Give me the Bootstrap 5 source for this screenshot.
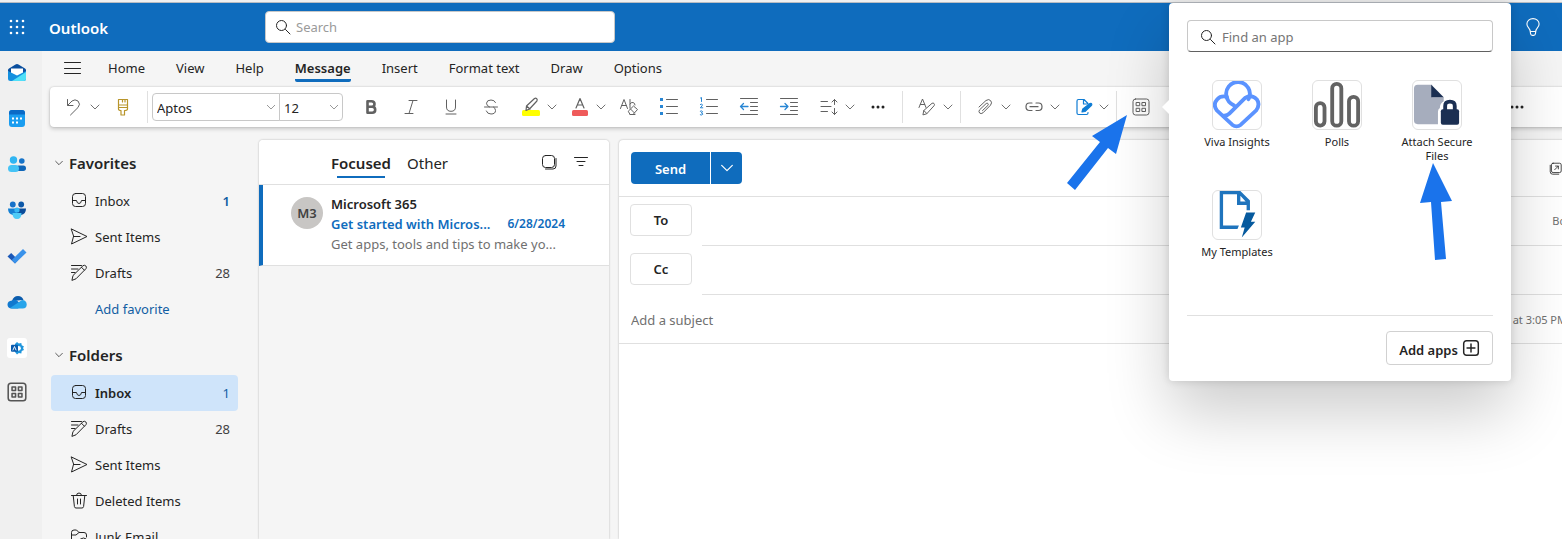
<!DOCTYPE html>
<html lang="en">
<head>
<meta charset="utf-8">
<meta name="viewport" content="width=device-width, initial-scale=1">
<title>Outlook</title>
<link href="https://cdn.jsdelivr.net/npm/bootstrap@5.3.0/dist/css/bootstrap.min.css" rel="stylesheet">
<style>
:root{--brand:#0f6cbd;--ink:#242424;--muted:#616161;--line:#e0e0e0}
body{font-family:"Noto Sans","Open Sans",sans-serif;font-size:13px;line-height:20px;color:var(--ink);background:#f5f5f5;height:100vh;overflow:hidden}
svg{display:block;fill:none;stroke:currentColor;stroke-linecap:round;stroke-linejoin:round;flex:none}
button{font:inherit;color:inherit}
.semi{font-weight:600}
.plain-btn{border:0;background:none;padding:0;display:flex;align-items:center;justify-content:center}
.topbar{background:var(--brand);height:51px;border-top:2px solid #f0f0f0;box-shadow:inset 0 1px #b8bcc2;color:#fff}
.topbar .launcher{width:33px}
.brand-name{font-size:15px;margin-left:16px;width:216px;padding-top:2px}
.box-input{background:#fff;border:1px solid #c8c8c8;border-radius:4px;height:32px;color:var(--ink)}
.box-input input{border:0;outline:0;background:none;min-width:0;flex:1;font-size:13px;padding:0}
.box-input input::placeholder{color:#757575;opacity:1}
.top-search{width:350px}
.top-search input::placeholder{color:#9a9a9a}
.find-app{padding:2px 12px 0;gap:6px}
.rail{width:42px;background:#f0f0f0;flex:none}
.rail a{height:46px;width:34px;display:flex;align-items:center;justify-content:center}
.rail a:first-child{height:44px}.rail a:last-child{height:42px;color:#555}
.rail svg{stroke:none}
.stage{margin-right:-12px}
.tabs{height:36px;padding-left:14px}
.tabs a{color:var(--ink);text-decoration:none;margin-left:31px;height:31px;padding-top:7px;border-bottom:3px solid transparent}
.tabs a:first-of-type{margin-left:27px}
.tabs a.active{border-color:var(--brand);font-weight:600;border-radius:2px}
.ribbon{height:40px;margin-left:8px;padding-left:4px;background:#fff;border-radius:4px;box-shadow:0 0 2px rgba(0,0,0,.2),0 2px 4px rgba(0,0,0,.18);color:var(--muted);z-index:5}
.tool{width:40px;height:40px;flex:none}
.tool-split{width:49px;padding:0 2px 0 10px;gap:5px}
.rule{width:1px;height:32px;background:var(--line);margin:0 4px;flex:none}
.pick{border:1px solid #c8c8c8;height:28px;border-radius:4px;background-color:#fff;font-size:13px;padding:1px 4px 0;line-height:26px;color:var(--ink);background-position:right 3px center;background-size:10px 10px;background-image:url("data:image/svg+xml,%3csvg xmlns='http://www.w3.org/2000/svg' viewBox='0 0 10 10'%3e%3cpath fill='none' stroke='%23999' d='m1 3 4 4 4-4'/%3e%3c/svg%3e")}
.pick-font{width:128px;border-radius:4px 0 0 4px}
.pick-size{width:64px;border-radius:0 4px 4px 0;margin-left:-1px;margin-right:8px}
.flyout{position:absolute;left:48px;top:-84px;width:342px;padding:17px 18px 16px;background:#fff;border-radius:4px;box-shadow:0 0 8px rgba(0,0,0,.14),0 32px 64px rgba(0,0,0,.2);color:var(--ink)}
.flyout::before{content:"";position:absolute;left:-7px;top:96px;border:solid transparent;border-width:8px 8px 8px 0;border-right-color:#fff}
.flyout .box-input{border-bottom-color:#616161}
.apps{display:grid;grid-template-columns:repeat(3,100px);grid-auto-rows:110px;margin-top:28px;height:235px}
.app-tile{display:flex;flex-direction:column;align-items:center;font-size:11px;line-height:14px;border:0;background:none;padding:0 8px;color:var(--ink)}
.app-icon{border:1px solid var(--line);border-radius:6px;margin-bottom:5px}
.flyout-foot{border-top:1px solid var(--line);padding-top:15px}
.add-apps{border:1px solid #d1d1d1;border-radius:4px;height:34px;width:107px;background:#fff;padding:4px 0 0}
.add-apps svg{margin-bottom:4px}
.pointer{position:absolute;left:-60px;top:0;pointer-events:none;stroke:none;fill:#1a73eb}
.folders{width:217px;flex:none;padding:5px 21px 0 9px}
.folder-head{height:38px;font-size:15px;font-weight:600;gap:5px;padding:0 0 2px 3px}
.folder-list{list-style:none;padding:0;margin:0 0 10px}
.folder{height:36px;padding:0 8px 0 19px;gap:7px;color:var(--ink);text-decoration:none;border-radius:4px;white-space:nowrap}
.folder .num{color:#424242}
.folder .num.new{color:#115ea3}
.folder.current{background:#cfe4fa}
.folder.add{color:#115ea3;padding-left:44px}
.inbox{width:350px;flex:none;background:#f5f5f5;border-radius:4px 4px 0 0;box-shadow:0 0 2px rgba(0,0,0,.3)}
.inbox-top{height:45px;background:#fff;border-bottom:1px solid var(--line);border-radius:4px 4px 0 0;padding:2px 20px 0 72px}
.inbox-top a{font-size:15px;color:var(--ink);text-decoration:none}
.inbox-top a.on{font-weight:600;position:relative;margin-right:16px}
.inbox-top a.on::after{content:"";position:absolute;left:6px;right:6px;bottom:-5px;height:2px;background:var(--brand)}
.mail{height:81px;background:#fff;border-left:4px solid var(--brand);border-bottom:1px solid var(--line);padding:9px 44px 0 28px;gap:8px;text-decoration:none;color:var(--ink)}
.avatar{width:32px;height:32px;border-radius:50%;background:#c8c6c4;margin-top:3px;flex:none;color:#424242}
.mail-text{flex:1;min-width:0}
.subject{color:var(--brand)}
.date{font-size:11px;color:var(--brand)}
.mail .date{font-size:12px}
.preview{color:#707070;white-space:nowrap}
.compose{margin-left:10px;background:#fff;border-radius:4px 0 0 0;box-shadow:0 0 2px rgba(0,0,0,.3);min-width:0}
.compose-top{height:57px;border-bottom:1px solid var(--line);padding:0 12px}
.send{background:var(--brand);color:#fff;width:79px;height:32px;border-radius:4px 0 0 4px;padding-top:2px}
.send-more{background:var(--brand);color:#fff;width:31px;height:32px;border-radius:0 4px 4px 0;margin-left:1px}
.send-more svg{stroke-width:.8}
.who{height:49px;padding-left:11px;gap:10px}
.who button{width:62px;height:32px;border:1px solid var(--line);border-radius:4px;background:#fff;margin-bottom:4px}
.who-line{align-self:stretch;border-bottom:1px solid var(--line);padding-right:4px;flex:1}
.who-line input,.subject-row input{border:0;outline:0;background:none;flex:1;min-width:0;padding:0}
.subject-row{height:49px;border-bottom:1px solid var(--line);padding:2px 7px 0 12px}
.subject-row input::placeholder{color:#707070;opacity:1}
.aside-text{font-size:11px;color:#707070;white-space:nowrap;text-decoration:none}
</style>
</head>
<body class="d-flex flex-column">
<svg width="0" height="0" class="position-absolute" aria-hidden="true">
 <symbol id="chev" viewBox="0 0 12 12"><path stroke-width=".9" d="m2 4 4 4 4-4"/></symbol>
 <symbol id="lens" viewBox="0 0 16 16"><circle cx="6.500" cy="6.500" r="5"/><path d="m10.500 10.500 4.500 4.500"/></symbol>
 <symbol id="grid" viewBox="0 0 20 20"><rect x="2" y="2" width="16" height="16" rx="2.500"/><path d="M5.500 5.500h3.200v3.200H5.500zM11.300 5.500h3.200v3.200h-3.200zM5.500 11.300h3.200v3.200H5.500zM11.300 11.300h3.200v3.200h-3.200z"/></symbol>
 <symbol id="tray" viewBox="0 0 18 18"><rect x="2.500" y="1.500" width="13" height="13" rx="3"/><path d="M2.500 8.500h4q.5 3 2.500 3t2.500-3h4"/></symbol>
 <symbol id="plane" viewBox="0 0 18 18"><path d="M1.500 1 17 8.500 1.500 16l2-7.500zM3.500 8.500H10"/></symbol>
 <symbol id="draft" viewBox="0 0 18 18"><path d="M1.500 1.500h10M1.500 5h6.500M1.500 8.500H5M2 16l1-4.500L13 1.700q1.500-1 2.800.2 1.200 1.300.2 2.700L6.300 14.500zM11.500 3.300l2.800 2.800"/></symbol>
 <symbol id="bin" viewBox="0 0 18 18"><path d="M1.500 3.500h15M6.500 3.500q0-2.500 2.500-2.500t2.500 2.500M3.200 3.500l1.200 11q.2 1.500 1.600 1.500h6q1.400 0 1.600-1.500l1.200-11M7.500 7v5M10.500 7v5"/></symbol>
 <symbol id="junk" viewBox="0 0 18 18"><path d="M9 15.500H4q-2.500 0-2.500-2.500V4.500Q1.500 2 4 2h2.500L9 4.500h5q2.500 0 2.500 2.500v2M1.500 7H6l3-2.500"/><circle cx="13.500" cy="13.500" r="3.500"/><path d="m11 11 5 5"/></symbol>
</svg>

<header class="topbar d-flex align-items-center flex-shrink-0">
 <button class="plain-btn launcher" aria-label="App launcher"><svg width="16" height="16" viewBox="0 0 16 16" style="stroke:none;fill:currentColor"><circle cx="2" cy="2" r="1.300"/><circle cx="8" cy="2" r="1.300"/><circle cx="14" cy="2" r="1.300"/><circle cx="2" cy="8" r="1.300"/><circle cx="8" cy="8" r="1.300"/><circle cx="14" cy="8" r="1.300"/><circle cx="2" cy="14" r="1.300"/><circle cx="8" cy="14" r="1.300"/><circle cx="14" cy="14" r="1.300"/></svg></button>
 <span class="brand-name semi">Outlook</span>
 <label class="box-input top-search d-flex align-items-center px-2 gap-1"><svg width="18" height="16"><use href="#lens"/></svg><input type="search" placeholder="Search" aria-label="Search"></label>
 <button class="plain-btn ms-auto me-3 px-1" aria-label="Tips"><svg width="18" height="20" viewBox="0 0 16 18"><path d="M5.500 13C5.500 10 2.500 9.500 2.500 6.300 2.500 3.500 5 1.500 8 1.500s5.500 2 5.500 4.800c0 3.200-3 3.700-3 6.700zM5.500 13l.3 2q.2 1.500 1.500 1.500h1.400q1.300 0 1.500-1.500l.3-2"/></svg></button>
</header>

<div class="d-flex flex-fill" style="min-height:0">
 <nav class="rail d-flex flex-column" aria-label="Apps">
  <a href="#" aria-label="Mail"><svg width="20" height="20" viewBox="0 0 20 20"><path fill="#0b4f9e" d="M1 8.500V7q0-1 1-1.500L8.500 1.500q1.500-.8 3 0L18 5.500q1 .5 1 1.500v2l-9 5z"/><path fill="#fff" d="M4 5.500h12V13H4z"/><path fill="#1490df" d="M1 8 10 12.500 19 8v7.500q0 2.500-2.500 2.500h-13Q1 18 1 15.500z"/><path fill="#50e0f8" d="M5 18 19 9v6.500q0 2.500-2.500 2.500z"/></svg></a>
  <a href="#" aria-label="Calendar"><svg width="20" height="20" viewBox="0 0 20 20"><rect x="2" y="2" width="16" height="17" rx="3" fill="#1a9df0"/><path fill="#0a6ac6" d="M2 6.500V5q0-3 3-3h10q3 0 3 3v1.500z"/><path fill="#fff" d="M5 9.500h2v2H5zM9 9.500h2v2H9zM13 9.500h2v2h-2zM5 13.500h2v2H5zM9 13.500h2v2H9z"/></svg></a>
  <a href="#" aria-label="People"><svg width="20" height="20" viewBox="0 0 20 20"><circle cx="6.500" cy="6" r="3.700" fill="#31b5f2"/><circle cx="14.800" cy="7" r="2.800" fill="#1673c8"/><rect x="9" y="11.500" width="10" height="5.500" rx="2.700" fill="#0f66b8"/><rect x="1" y="11" width="11" height="7" rx="3.500" fill="#45c3f5"/></svg></a>
  <a href="#" aria-label="Groups"><svg width="20" height="20" viewBox="0 0 20 20"><circle cx="5.800" cy="4.500" r="2.900" fill="#1671c9"/><circle cx="14.200" cy="4.500" r="2.900" fill="#0d58a8"/><path fill="#1480d4" d="M1 8.500h9V15H6Q1 14 1 8.500z"/><path fill="#0a4c9a" d="M10 8.500h9q0 5.500-5 6.500h-4z"/><circle cx="10" cy="10" r="2.600" fill="#36b8f4"/><path fill="#4dcbf7" d="M5.500 13h9q0 6-4.500 6t-4.500-6z"/></svg></a>
  <a href="#" aria-label="To Do"><svg width="20" height="20" viewBox="0 0 20 20"><path fill="#1b58b8" d="M.5 10.500 4.200 7l7 7L8 17.500z"/><path fill="#3a92ea" d="M4.800 14 16 3l3.500 3.500L8 17.500z"/></svg></a>
  <a href="#" aria-label="OneDrive"><svg width="20" height="20" viewBox="0 0 20 20"><path fill="#0b5cad" d="M5 9q1.500-5 6-5 4 0 5.500 4z"/><path fill="#1179cf" d="M4 16.500q-3.500-.5-3.500-4T5 8.500q2-1.500 5 0l5 5-4 3z"/><path fill="#27a4ea" d="M3 16 15 8q4.500 0 4.700 4.500 0 4-4 4H5z"/></svg></a>
  <a href="#" aria-label="Admin"><svg width="20" height="20" viewBox="0 0 20 20"><rect width="20" height="20" rx="3" fill="#fff"/><path fill="#1e95dc" d="m10 4 1.800 1.500L14.300 5l.4 2.300L17 8.500 16 10l1 2-2.300 1-.4 2.500-2.500-.5L10 16.500 8 14V6z"/><circle cx="11.500" cy="10.300" r="2.400" fill="#fff"/><rect x="4" y="6.800" width="7" height="7" rx="1" fill="#0a5cae"/><path stroke="#fff" fill="none" stroke-width=".9" d="m6 12 1.500-3.500L9 12"/></svg></a>
  <a href="#" aria-label="More apps"><svg width="22" height="22" style="stroke:currentColor;stroke-width:1.400"><use href="#grid"/></svg></a>
 </nav>

 <div class="stage d-flex flex-column flex-fill" style="min-width:0">
  <nav class="tabs d-flex align-items-start flex-shrink-0" aria-label="Ribbon tabs">
   <button class="plain-btn ms-2 mt-1 pt-1" aria-label="Menu"><svg width="17" height="18" viewBox="0 0 17 18"><path d="M.5 3.500h16M.5 9.500h16M.5 14.500h16"/></svg></button>
   <a href="#">Home</a><a href="#">View</a><a href="#">Help</a><a href="#" class="active">Message</a><a href="#">Insert</a><a href="#">Format text</a><a href="#">Draw</a><a href="#">Options</a>
  </nav>

  <div class="ribbon d-flex align-items-center position-relative flex-shrink-0">
   <button class="plain-btn tool tool-split" aria-label="Undo"><svg width="20" height="20" viewBox="0 0 20 20"><path d="M3.500 2.500v6H9M3.700 8.300 8 4q3-2.300 6 0 3 3.200 0 6.500L6.500 18"/></svg><svg width="12" height="12"><use href="#chev"/></svg></button>
   <button class="plain-btn tool" aria-label="Format painter"><svg width="20" height="20" viewBox="0 0 20 20" style="color:#b8952b;stroke-width:1.200"><path d="M5.500 2.500h9v8h-9zM5.500 8h9M9.500 2.500V5M12 2.500V5M5.500 10.500V12q0 1.500 2.500 1.500V18h3.500v-4.500q3 0 3-1.500v-1.500"/></svg></button>
   <span class="rule"></span>
   <select class="form-select pick pick-font" aria-label="Font"><option>Aptos</option></select>
   <select class="form-select pick pick-size" aria-label="Font size"><option>12</option></select>
   <button class="plain-btn tool" aria-label="Bold"><svg width="20" height="20" viewBox="0 0 20 20" style="stroke-width:2.600"><path d="M6.500 4.200h4q3 0 3 2.800t-3 2.800h-4zM6.500 9.800h4.700q3 0 3 3t-3 3H6.500z"/></svg></button>
   <button class="plain-btn tool" aria-label="Italic"><svg width="20" height="20" viewBox="0 0 20 20"><path d="M8 3.500h8M4 16.500h8M12 3.500l-4 13"/></svg></button>
   <button class="plain-btn tool" aria-label="Underline"><svg width="20" height="20" viewBox="0 0 20 20"><path d="M5.500 3v7q0 4.300 4.500 4.300t4.500-4.300V3M5 17h10"/></svg></button>
   <button class="plain-btn tool" aria-label="Strikethrough"><svg width="20" height="20" viewBox="0 0 20 20"><path d="M14.500 5.500q-1-2.500-4.500-2.500-4.200 0-4.500 3.200Q5.500 8.800 8.500 10M3.500 10h13M5.300 14q.9 3 4.700 3 4.500 0 4.500-3.500 0-2.300-2-3.500"/></svg></button>
   <button class="plain-btn tool tool-split" aria-label="Highlight"><svg width="20" height="20" viewBox="0 0 20 20"><rect x="1" y="13" width="18" height="6" rx="1.500" fill="#ff0" stroke="none"/><path fill="#fff" stroke-width="1.200" d="m5 13.500.5-4.500 8-7.500q1.200-.7 2.200.2 1 1.100.2 2.300l-7.400 8zM5.500 9 9 12"/></svg><svg width="12" height="12"><use href="#chev"/></svg></button>
   <button class="plain-btn tool tool-split" aria-label="Font color"><svg width="20" height="20" viewBox="0 0 20 20"><rect x="2" y="13" width="16" height="6" rx="1.500" fill="#ef5b5b" stroke="none"/><path stroke-width="1.200" d="m6 11 4-9.500 4 9.500M7.300 8h5.400"/></svg><svg width="12" height="12"><use href="#chev"/></svg></button>
   <button class="plain-btn tool" aria-label="Clear formatting"><svg width="20" height="20" viewBox="0 0 20 20"><path d="M1.500 11.500 5 2.500l3.500 9M2.800 8.500h4.400M11 11V2.500M11 7q1-2 3-1.500 2 .4 2 2.500M9.500 14l5-5 4 3.500-4.500 5h-2.500zM11.500 12l4 4M11 17.500h5"/></svg></button>
   <button class="plain-btn tool" aria-label="Bullets"><svg width="20" height="20" viewBox="0 0 20 20"><path d="M7.500 2.500h11M7.500 9.500h11M7.500 16.500h11"/><path fill="#2886d4" stroke="none" d="M1 1h3v3H1zM1 8h3v3H1zM1 15h3v3H1z"/></svg></button>
   <button class="plain-btn tool" aria-label="Numbering"><svg width="20" height="20" viewBox="0 0 20 20"><path d="M7.500 2.500h11M7.500 9.500h11M7.500 16.500h11"/><path stroke="#2886d4" d="m1.500 1 1-.5v4M1.300 7.500q1.200-1 2 0 .6 1-2 3.300h2.500M1.300 14.200q2-.8 2.200.3 0 1-1.300 1.300 1.700.2 1.600 1.400-.5 1.400-2.500.6"/></svg></button>
   <button class="plain-btn tool" aria-label="Decrease indent"><svg width="20" height="20" viewBox="0 0 20 20"><path d="M1.500 1.500h17M11.500 5.500h7M11.500 9.500h7M11.500 13.500h7M1.500 17.500h17"/><path stroke="#2886d4" stroke-width="1.300" d="M9 9.500H1.500M4.500 6.500l-3 3 3 3"/></svg></button>
   <button class="plain-btn tool" aria-label="Increase indent"><svg width="20" height="20" viewBox="0 0 20 20"><path d="M1.500 1.500h17M11.500 5.500h7M11.500 9.500h7M11.500 13.500h7M1.500 17.500h17"/><path stroke="#2886d4" stroke-width="1.300" d="M1.500 9.500H9M6 6.500l3 3-3 3"/></svg></button>
   <button class="plain-btn tool tool-split" aria-label="Line spacing"><svg width="20" height="20" viewBox="0 0 20 20"><path d="M2 4.500h6.500M2 9.500h10M2 14.500h6.500M15.500 2.500v5M13 5l2.500-2.500L18 5M15.500 11.500v6M13 15l2.500 2.500L18 15"/></svg><svg width="12" height="12"><use href="#chev"/></svg></button>
   <button class="plain-btn tool" aria-label="More formatting"><svg width="20" height="20" viewBox="0 0 20 20" style="fill:#242424;stroke:none"><circle cx="5" cy="10" r="1.500"/><circle cx="10" cy="10" r="1.500"/><circle cx="15" cy="10" r="1.500"/></svg></button>
   <span class="rule"></span>
   <button class="plain-btn tool tool-split" aria-label="Styles"><svg width="20" height="20" viewBox="0 0 20 20"><path d="M2 10.500 5.500 2 9 10.500M3.300 7.500h4.400M6 17.500l.8-4 8.200-7.200q1.200-.6 2 .2.900 1 .1 2.200L10 16.500zM6.800 13.500l3 3"/></svg><svg width="12" height="12"><use href="#chev"/></svg></button>
   <span class="rule"></span>
   <button class="plain-btn tool tool-split" aria-label="Attach file"><svg width="20" height="20" viewBox="0 0 20 20"><path d="m4 10 7-6.500q3-2 4.700.2 1.800 2-.2 4.500L8 15.800q-2 1.500-3.400.2-1.300-1.500 0-3.200l6.600-6.300q1-.7 1.700 0 .8.800 0 1.900L7.500 13.600"/></svg><svg width="12" height="12"><use href="#chev"/></svg></button>
   <button class="plain-btn tool tool-split" aria-label="Link"><svg width="20" height="20" viewBox="0 0 20 20"><path stroke-width="1.200" d="M8 6H5.500Q2 6 2 9.700t3.500 3.800H8M12 6h2.500Q18 6 18 9.700t-3.500 3.800H12M6 9.700h8"/></svg><svg width="12" height="12"><use href="#chev"/></svg></button>
   <button class="plain-btn tool tool-split" aria-label="Signature"><svg width="20" height="20" viewBox="0 0 20 20" style="color:#0f7cd4;stroke-width:1.200"><path d="M15 15.500v.5q0 1.500-1.500 1.500h-8Q4 17.500 4 16V4q0-1.500 1.500-1.500H11l4 4M10.500 2.500V7H15"/><path fill="currentColor" d="m9 15 .8-3L17 6.500q1.300-.4 1.700.4.400.9-.4 1.700L12 14.500z"/></svg><svg width="12" height="12" style="color:#616161"><use href="#chev"/></svg></button>
   <span class="rule"></span>
   <div class="position-relative">
    <button class="plain-btn tool" aria-label="Apps"><svg width="20" height="20"><use href="#grid"/></svg></button>
    <section class="flyout" aria-label="Apps">
     <label class="box-input find-app d-flex align-items-center"><svg width="16" height="16"><use href="#lens"/></svg><input type="search" placeholder="Find an app" aria-label="Find an app"></label>
     <div class="apps">
      <button class="app-tile"><svg class="app-icon" width="50" height="50" viewBox="0 0 50 50" style="color:#5b93ff;stroke-width:4"><path d="M14.500 17.500A12.300 12.300 0 1 1 37 19"/><path d="M22 25.500Q15 22 14.500 16.500 8 15 4.500 19q-5 5.500-.5 11.500l16 15q4.500 3.500 9 0L45 30.500q4.500-6 .5-11.500-5.500-5.500-12-1.500L17 34q-2.500 2.500-6.500 2"/></svg>Viva Insights</button>
      <button class="app-tile"><svg class="app-icon" width="50" height="50" viewBox="0 0 50 50" style="color:#636363;stroke-width:4"><rect x="3" y="23" width="9" height="23.500" rx="4.500"/><rect x="20" y="3" width="9.500" height="43.500" rx="4.700"/><rect x="37.500" y="16.500" width="9.500" height="30" rx="4.700"/></svg>Polls</button>
      <button class="app-tile"><svg class="app-icon" width="50" height="50" viewBox="0 0 50 50" style="stroke:none"><path fill="#a6adbd" d="M5 4h15v13h12v4q-4 2-4 7-2 1-2 4v13H5q-4 0-4-4V8q0-4 4-4z"/><path fill="#1b2f52" d="M19 4v13h13z"/><rect x="29" y="29.500" width="19" height="16" rx="2" fill="#1b2f52"/><path d="M33.500 30v-4q0-4.500 5-4.500t5 4.500v4" stroke="#1b2f52" stroke-width="4"/></svg>Attach Secure Files</button>
      <button class="app-tile"><svg class="app-icon" width="50" height="50" viewBox="0 0 50 50" style="stroke:none"><path fill="#1f74bd" d="M7 0h21.500L38.500 10v10h-3.500v-5.500H25V3.500H10.500V36H27l-1.500 3.500H7zm21.500 5v6H34z"/><path fill="#065a9e" d="M34.500 22.500H44L39.500 32h4.500L30 48.500 33 38h-4z"/></svg>My Templates</button>
     </div>
     <div class="flyout-foot d-flex justify-content-end">
      <button class="add-apps semi d-flex align-items-center justify-content-center gap-1">Add apps<svg width="18" height="18" viewBox="0 0 16 16" style="stroke-width:1.300"><rect x="1.500" y="1.500" width="13" height="13" rx="2.500"/><path d="M8 4.500v7M4.500 8h7"/></svg></button>
     </div>
    </section>
    <svg class="pointer" width="400" height="180" viewBox="1061 87 400 180" aria-hidden="true"><path d="m1127 115-11 39-8-6-33 42-8-7 33-41-8-6zM1433 163l19 38-11 1 5 57-11 1-4-58-11 1z"/></svg>
   </div>
   <button class="plain-btn tool ms-auto" style="margin-right:37px" aria-label="More options"><svg width="20" height="20" viewBox="0 0 20 20" style="fill:#242424;stroke:none"><circle cx="5" cy="10" r="1.500"/><circle cx="10" cy="10" r="1.500"/><circle cx="15" cy="10" r="1.500"/></svg></button>
  </div>

  <div class="d-flex flex-fill" style="min-height:0;margin-top:13px">
   <nav class="folders" aria-label="Folders">
    <div class="folder-head d-flex align-items-center"><svg width="10" height="12" viewBox="0 0 12 12"><use href="#chev"/></svg>Favorites</div>
    <ul class="folder-list">
     <li><a href="#" class="folder d-flex align-items-center"><svg width="18" height="18"><use href="#tray"/></svg>Inbox<span class="num new semi ms-auto">1</span></a></li>
     <li><a href="#" class="folder d-flex align-items-center"><svg width="18" height="18"><use href="#plane"/></svg>Sent Items</a></li>
     <li><a href="#" class="folder d-flex align-items-center"><svg width="18" height="18"><use href="#draft"/></svg>Drafts<span class="num ms-auto">28</span></a></li>
     <li><a href="#" class="folder add d-flex align-items-center">Add favorite</a></li>
    </ul>
    <div class="folder-head d-flex align-items-center"><svg width="10" height="12" viewBox="0 0 12 12"><use href="#chev"/></svg>Folders</div>
    <ul class="folder-list">
     <li><a href="#" class="folder current d-flex align-items-center semi"><svg width="18" height="18"><use href="#tray"/></svg>Inbox<span class="num new fw-normal ms-auto">1</span></a></li>
     <li><a href="#" class="folder d-flex align-items-center"><svg width="18" height="18"><use href="#draft"/></svg>Drafts<span class="num ms-auto">28</span></a></li>
     <li><a href="#" class="folder d-flex align-items-center"><svg width="18" height="18"><use href="#plane"/></svg>Sent Items</a></li>
     <li><a href="#" class="folder d-flex align-items-center"><svg width="18" height="18"><use href="#bin"/></svg>Deleted Items</a></li>
     <li><a href="#" class="folder d-flex align-items-center"><svg width="18" height="18"><use href="#junk"/></svg>Junk Email</a></li>
    </ul>
   </nav>

   <section class="inbox" aria-label="Message list">
    <div class="inbox-top d-flex align-items-center">
     <a href="#" class="on">Focused</a><a href="#">Other</a>
     <button class="plain-btn ms-auto me-3" aria-label="Select"><svg width="16" height="16" viewBox="0 0 16 16"><rect x="1.500" y=".5" width="12" height="12" rx="3"/><path d="M15 3.500V11q0 3-3 3H4.500"/></svg></button>
     <button class="plain-btn" aria-label="Filter"><svg width="16" height="16" viewBox="0 0 16 16"><path d="M1.500 2.500h13M4 6.500h8M6 10.500h4"/></svg></button>
    </div>
    <a href="#" class="mail d-flex">
     <span class="avatar semi d-flex align-items-center justify-content-center">M3</span>
     <div class="mail-text">
      <div class="semi">Microsoft 365</div>
      <div class="d-flex justify-content-between semi"><span class="subject">Get started with Micros...</span><span class="date">6/28/2024</span></div>
      <div class="preview">Get apps, tools and tips to make yo...</div>
     </div>
    </a>
   </section>

   <main class="compose flex-fill">
    <div class="compose-top d-flex align-items-center">
     <button class="plain-btn send semi">Send</button><button class="plain-btn send-more" aria-label="Send options"><svg width="16" height="16"><use href="#chev"/></svg></button>
     <button class="plain-btn ms-auto" aria-label="Open in new window"><svg width="13" height="13" viewBox="0 0 16 16"><rect x="3" y="1.500" width="12" height="11.500" rx="2"/><path d="M1.500 4v8q0 3 3 3H12M7 9.500l4.500-4.500M8 5h3.500v3.500"/></svg></button>
    </div>
    <div class="who d-flex align-items-center"><button class="semi">To</button><div class="who-line d-flex align-items-center"><input type="text" aria-label="To"><a href="#" class="aside-text">Bcc</a></div></div>
    <div class="who d-flex align-items-center"><button class="semi">Cc</button><div class="who-line d-flex"><input type="text" aria-label="Cc"></div></div>
    <div class="subject-row d-flex align-items-center"><input type="text" placeholder="Add a subject" aria-label="Subject"><span class="aside-text">Draft saved at 3:05 PM</span></div>
   </main>
  </div>
 </div>
</div>
<script src="https://cdn.jsdelivr.net/npm/bootstrap@5.3.0/dist/js/bootstrap.bundle.min.js"></script>
</body>
</html>
